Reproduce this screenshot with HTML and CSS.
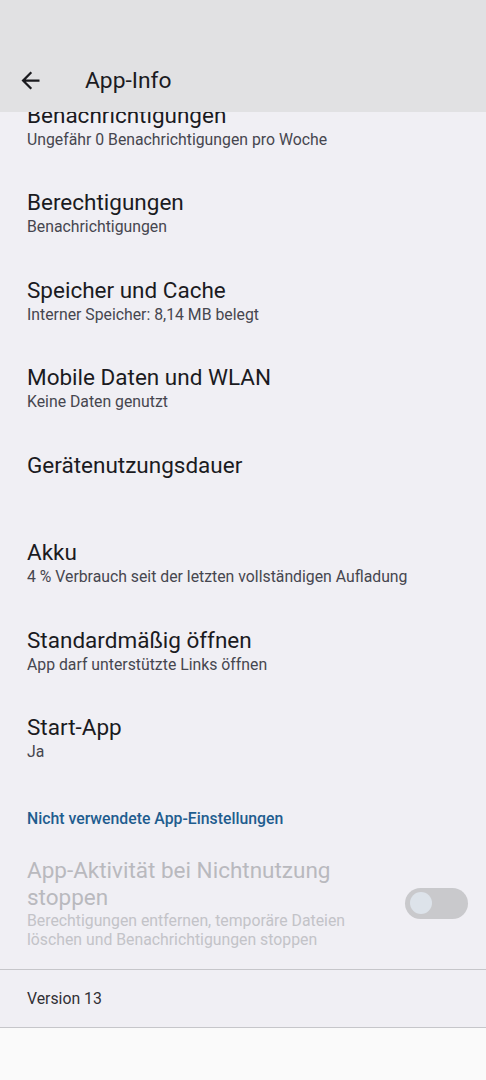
FILE: index.html
```html
<!DOCTYPE html>
<html lang="de">
<head>
<meta charset="UTF-8" />
<meta name="viewport" content="width=device-width, initial-scale=1" />
<title>App-Info</title>
<link rel="stylesheet" href="styles.css">
</head>
<body>

<div class="app-bar">
  <div class="bar-row">
    <svg class="back-icon" viewBox="0 0 24 24" width="27" height="27">
      <path d="M20 11H7.83l5.59-5.59L12 4l-8 8 8 8 1.41-1.41L7.83 13H20v-2z" fill="#1b1b1f"/>
    </svg>
    <span class="bar-title">App-Info</span>
  </div>
</div>

<div class="settings-list">
  <div class="pref-row">
    <div class="pref-title">Benachrichtigungen</div>
    <div class="pref-summary">Ungefähr 0 Benachrichtigungen pro Woche</div>
  </div>
  <div class="pref-row">
    <div class="pref-title">Berechtigungen</div>
    <div class="pref-summary">Benachrichtigungen</div>
  </div>
  <div class="pref-row">
    <div class="pref-title">Speicher und Cache</div>
    <div class="pref-summary">Interner Speicher: 8,14 MB belegt</div>
  </div>
  <div class="pref-row">
    <div class="pref-title">Mobile Daten und WLAN</div>
    <div class="pref-summary">Keine Daten genutzt</div>
  </div>
  <div class="pref-row">
    <div class="pref-title">Gerätenutzungsdauer</div>
  </div>
  <div class="pref-row">
    <div class="pref-title">Akku</div>
    <div class="pref-summary">4 % Verbrauch seit der letzten vollständigen Aufladung</div>
  </div>
  <div class="pref-row">
    <div class="pref-title">Standardmäßig öffnen</div>
    <div class="pref-summary">App darf unterstützte Links öffnen</div>
  </div>
  <div class="pref-row">
    <div class="pref-title">Start-App</div>
    <div class="pref-summary">Ja</div>
  </div>

  <div class="category">Nicht verwendete App-Einstellungen</div>

  <div class="switch-row disabled">
    <div class="switch-text">
      <div class="switch-title">App-Aktivität bei Nichtnutzung stoppen</div>
      <div class="switch-summary">Berechtigungen entfernen, temporäre Dateien löschen und Benachrichtigungen stoppen</div>
    </div>
    <div class="toggle">
      <div class="toggle-thumb"></div>
    </div>
  </div>

  <div class="version-row">Version 13</div>
</div>

<div class="bottom-area"></div>

</body>
</html>
```

FILE: styles.css
```css
html, body {
  margin: 0;
  padding: 0;
}
body {
  font-family: Roboto, "Noto Sans", Arial, sans-serif;
  background: #fafafa;
  color: #1b1b1f;
  width: 486px;
  overflow: hidden;
}
.app-bar {
  position: relative;
  z-index: 2;
  height: 112px;
  background: #e1e1e3;
  padding-top: 52px;
  box-sizing: border-box;
}
.bar-row {
  height: 56px;
  display: flex;
  align-items: center;
}
.back-icon {
  margin-left: 17px;
  display: block;
}
.bar-title {
  margin-left: 41px;
  font-size: 22.8px;
  color: #1b1b1f;
}
.settings-list {
  margin-top: -29.25px;
  background: #f0eff4;
  border-bottom: 1px solid #c6c6ca;
}
.pref-row {
  height: 87.5px;
  box-sizing: border-box;
  padding: 18.75px 27px 0;
}
.pref-title {
  font-size: 22.5px;
  line-height: 26px;
  color: #1b1b1f;
}
.pref-summary {
  font-size: 15.8px;
  line-height: 23px;
  color: #46464f;
}
.category {
  padding: 24px 27px 0;
  font-size: 15.8px;
  line-height: 23px;
  font-weight: 500;
  color: #1f5d8f;
}
.switch-row {
  display: flex;
  align-items: center;
  padding: 27px 18px 19px 27px;
  border-bottom: 1px solid #c6c6ca;
}
.switch-text {
  flex: 1;
  margin-right: 24px;
}
.switch-title {
  font-size: 22.5px;
  line-height: 27px;
}
.switch-summary {
  font-size: 15.8px;
  line-height: 19.5px;
}
.disabled .switch-title {
  color: #b9b9be;
}
.disabled .switch-summary {
  color: #c3c3c8;
}
.toggle {
  width: 63px;
  height: 31px;
  border-radius: 16px;
  background: #c9c9cc;
  display: flex;
  align-items: center;
  padding-left: 5px;
  box-sizing: border-box;
}
.toggle-thumb {
  width: 22px;
  height: 22px;
  border-radius: 50%;
  background: #dde3ea;
}
.version-row {
  padding: 19px 27px 18px;
  font-size: 15.8px;
  line-height: 20px;
  color: #303034;
}
.bottom-area {
  height: 60px;
  background: #fafafa;
}
```
